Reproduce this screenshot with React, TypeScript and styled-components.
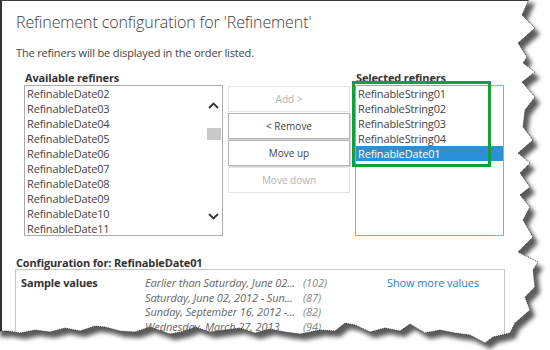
import styled, { createGlobalStyle } from 'styled-components';

const GlobalStyle = createGlobalStyle`
    html, body {
        margin: 0;
        padding: 0;
        background: #fff;
    }
    body {
        font-family: "Open Sans", "Noto Sans", sans-serif;
        color: #444;
    }
`;

const Screen = styled.div`
    position: relative;
    width: 550px;
    height: 350px;
    overflow: hidden;
    background: #fff;
`;

const Frame = styled.div`
    height: 100%;
    box-sizing: border-box;
    border-left: 2px solid #333;
    border-top: 1px solid #3a3a3a;
    padding: 10px 0 0 14px;
`;

const Title = styled.h1`
    margin: 0;
    font-size: 16px;
    font-weight: 300;
    line-height: 22px;
    color: #3c3c3c;
    letter-spacing: -0.1px;
`;

const Intro = styled.p`
    margin: 12px 0 0;
    font-size: 11px;
    line-height: 16px;
    letter-spacing: -0.15px;
`;

const Pickers = styled.div`
    position: relative;
    margin: 10px 0 0 8px;
    display: grid;
    grid-template-columns: 199px 122px 149px;
    grid-template-rows: 14px 151px;
    column-gap: 5px;
`;

const Label = styled.div`
    font-size: 11px;
    font-weight: 700;
    line-height: 14px;
    color: #333;
    padding-left: 1px;
    letter-spacing: -0.15px;
    white-space: nowrap;
`;

const ListBox = styled.div<{ $accent?: boolean }>`
    display: flex;
    border: 1px solid ${p => (p.$accent ? '#74b3e3' : '#ababab')};
    background: #fff;
    overflow: hidden;
`;

const Items = styled.ul`
    flex: 1;
    list-style: none;
    margin: 0;
    padding: 0;
`;

const Item = styled.li<{ $selected?: boolean }>`
    font-size: 11px;
    line-height: 15px;
    height: 15px;
    padding-left: 2px;
    letter-spacing: -0.15px;
    color: ${p => (p.$selected ? '#fff' : '#444')};
    background: ${p => (p.$selected ? '#2a91d8' : 'transparent')};
`;

const Scrollbar = styled.div`
    width: 17px;
    display: flex;
    flex-direction: column;
`;

const ArrowBox = styled.div`
    height: 38px;
    display: flex;
    align-items: center;
    justify-content: center;
`;

const Track = styled.div`
    flex: 1;
    padding: 4px 1px 0 2px;
`;

const Thumb = styled.div`
    height: 12px;
    background: #c9c9c9;
`;

const Buttons = styled.div`
    padding-top: 1px;
    display: flex;
    flex-direction: column;
    gap: 1px;
`;

const Button = styled.button<{ $disabled?: boolean }>`
    height: 26px;
    margin: 0;
    padding: 0;
    background: #fff;
    border: 1px solid ${p => (p.$disabled ? '#e3e3e3' : '#b4b4b4')};
    box-shadow: ${p => (p.$disabled ? 'none' : '1px 1px 0 #d6d6d6')};
    font-family: inherit;
    font-size: 10px;
    color: ${p => (p.$disabled ? '#b3b3b3' : '#444')};
`;

const Highlight = styled.div`
    position: absolute;
    left: 328px;
    top: 10px;
    width: 139px;
    height: 86px;
    box-sizing: border-box;
    border: 3px solid #10a03d;
    pointer-events: none;
`;

const ConfigHeading = styled(Label)`
    margin-top: 20px;
    padding-left: 0;
    line-height: 13px;
`;

const ConfigBox = styled.div`
    margin-left: -1px;
    width: 490px;
    height: 120px;
    box-sizing: border-box;
    border: 1px solid #c8c8c8;
    padding: 6px 0 0 5px;
    display: grid;
    grid-template-columns: 124px 242px auto;
    align-items: start;
`;

const FieldName = styled.div`
    font-size: 11px;
    font-weight: 700;
    line-height: 14px;
    color: #333;
    letter-spacing: -0.15px;
`;

const Values = styled.div`
    display: flex;
    flex-direction: column;
`;

const ValueRow = styled.div`
    display: flex;
    font-size: 11px;
    font-style: italic;
    line-height: 14.5px;
    letter-spacing: -0.1px;
    white-space: nowrap;
`;

const ValueText = styled.span`
    width: 158px;
    color: #666;
`;

const Count = styled.span`
    color: #888;
`;

const MoreLink = styled.a`
    font-size: 11px;
    line-height: 14px;
    color: #2a7dc5;
    text-decoration: none;
    letter-spacing: -0.1px;
`;

const TornEdge = styled.svg`
    position: absolute;
    left: 0;
    top: 0;
    pointer-events: none;
`;

const Chevron = ({ down }: { down?: boolean }) => (
    <svg width="11" height="7" viewBox="0 0 11 7">
        <polyline
            points={down ? '1,1 5.5,5.5 10,1' : '1,6 5.5,1.5 10,6'}
            fill="none"
            stroke="#333"
            strokeWidth="1.8"
        />
    </svg>
);

const available = [
    'RefinableDate02', 'RefinableDate03', 'RefinableDate04', 'RefinableDate05', 'RefinableDate06',
    'RefinableDate07', 'RefinableDate08', 'RefinableDate09', 'RefinableDate10', 'RefinableDate11',
];

const selected = ['RefinableString01', 'RefinableString02', 'RefinableString03', 'RefinableString04', 'RefinableDate01'];

const samples = [
    ['Earlier than Saturday, June 02...', '(102)'],
    ['Saturday, June 02, 2012 - Sun...', '(87)'],
    ['Sunday, September 16, 2012 -...', '(82)'],
    ['Wednesday, March 27, 2013', '(94)'],
];

// torn paper edge, right side top to bottom, then bottom right to left
const rightEdge = [
    [530, -3], [522, 15], [535, 28], [518, 43], [527, 57], [523, 63], [535, 72], [522, 82],
    [535, 97], [525, 110], [523, 127], [533, 140], [518, 153], [530, 163], [520, 173],
    [530, 187], [520, 195], [530, 207], [523, 220], [533, 237], [518, 252], [538, 262],
    [533, 270], [535, 287], [525, 297], [530, 310], [515, 323], [510, 333], [493, 337], [485, 343],
];
const bottomEdge = [
    [470, 335], [455, 333], [440, 330], [425, 333], [410, 324], [400, 331], [385, 328],
    [370, 332], [355, 325], [345, 323], [335, 331], [320, 330], [300, 334], [285, 332],
    [270, 329], [255, 333], [240, 328], [225, 330], [210, 332], [195, 327], [185, 331],
    [170, 334], [150, 327], [135, 332], [120, 331], [105, 327], [95, 326], [80, 331],
    [65, 328], [50, 332], [35, 330], [20, 333], [8, 331], [-3, 331],
];
const edge = [...rightEdge, ...bottomEdge];
const edgePts = edge.map(p => p.join(',')).join(' ');
const pagePath = `M-5,-5 L${edge.map(p => p.join(',')).join(' L')} L-5,331 Z`;
const outsidePath = `M-10,-10 H570 V370 H-10 Z ${pagePath}`;

export default function App() {
    return (
        <Screen>
            <GlobalStyle />
            <Frame>
                <Title>Refinement configuration for 'Refinement'</Title>
                <Intro>The refiners will be displayed in the order listed.</Intro>
                <Pickers>
                    <Label>Available refiners</Label>
                    <div />
                    <Label>Selected refiners</Label>
                    <ListBox>
                        <Items>
                            {available.map(name => (
                                <Item key={name}>{name}</Item>
                            ))}
                        </Items>
                        <Scrollbar>
                            <ArrowBox><Chevron /></ArrowBox>
                            <Track><Thumb /></Track>
                            <ArrowBox><Chevron down /></ArrowBox>
                        </Scrollbar>
                    </ListBox>
                    <Buttons>
                        <Button $disabled>Add &gt;</Button>
                        <Button>&lt; Remove</Button>
                        <Button>Move up</Button>
                        <Button $disabled>Move down</Button>
                    </Buttons>
                    <ListBox $accent>
                        <Items>
                            {selected.map(name => (
                                <Item key={name} $selected={name === 'RefinableDate01'}>{name}</Item>
                            ))}
                        </Items>
                    </ListBox>
                    <Highlight />
                </Pickers>
                <ConfigHeading>Configuration for: RefinableDate01</ConfigHeading>
                <ConfigBox>
                    <FieldName>Sample values</FieldName>
                    <Values>
                        {samples.map(([text, count]) => (
                            <ValueRow key={text}>
                                <ValueText>{text}</ValueText>
                                <Count>{count}</Count>
                            </ValueRow>
                        ))}
                    </Values>
                    <MoreLink href="#">Show more values</MoreLink>
                </ConfigBox>
            </Frame>
            <TornEdge width="550" height="350" viewBox="0 0 550 350">
                <defs>
                    <clipPath id="outside">
                        <path d={outsidePath} clipRule="evenodd" />
                    </clipPath>
                    <filter id="soft" x="-10%" y="-10%" width="120%" height="120%">
                        <feGaussianBlur stdDeviation="2.2" />
                    </filter>
                </defs>
                <path d={outsidePath} fill="#fff" fillRule="evenodd" />
                <g clipPath="url(#outside)">
                    <path d={pagePath} transform="translate(5,6)" fill="#5a5a5a" filter="url(#soft)" />
                </g>
                <polyline points={edgePts} fill="none" stroke="#222" strokeWidth="0.8" strokeDasharray="1 1" />
            </TornEdge>
        </Screen>
    );
}
